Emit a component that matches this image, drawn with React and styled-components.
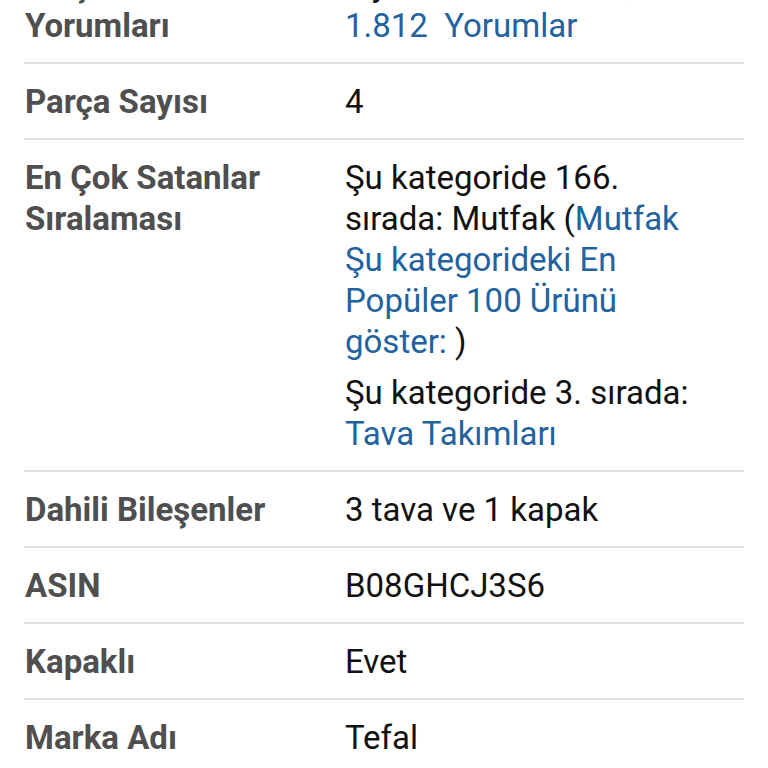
import React from 'react';
import styled, { createGlobalStyle } from 'styled-components';

const GlobalStyle = createGlobalStyle`
  html, body {
    margin: 0;
    padding: 0;
    background: #fff;
    overflow: hidden;
  }
  body {
    font-family: Roboto, "Noto Sans", "Liberation Sans", sans-serif;
    -webkit-font-smoothing: antialiased;
  }
`;

// page is scrolled: first row only partly visible
const Details = styled.div`
  margin-top: -53px;
  padding: 0 24px;
`;

const Row = styled.div`
  display: grid;
  grid-template-columns: 250px 360px;
  column-gap: 70px;
  padding: 17px 0 16px 1px;
  border-bottom: 2px solid #e0e0e0;
  font-size: 33px;
  line-height: 41px;
`;

const Label = styled.div`
  color: #4f4f4f;
  font-weight: 700;
`;

const Value = styled.div`
  color: #111;
  font-weight: 400;
`;

const Para = styled.p`
  margin: 0;
  & + & {
    margin-top: 10px;
  }
`;

const Link = styled.a`
  color: #22629f;
  text-decoration: none;
`;

const rows = [
  { label: 'Dahili Bileşenler', value: '3 tava ve 1 kapak' },
  { label: 'ASIN', value: 'B08GHCJ3S6' },
  { label: 'Kapaklı', value: 'Evet' },
  { label: 'Marka Adı', value: 'Tefal' },
];

export default function App() {
  return (
    <>
      <GlobalStyle />
      <Details>
        <Row>
          <Label>Müşteri Yorumları</Label>
          <Value>
            5 yıldız üzerinden 4,7
            <br />
            <Link href="#">1.812&nbsp; Yorumlar</Link>
          </Value>
        </Row>
        <Row>
          <Label>Parça Sayısı</Label>
          <Value>4</Value>
        </Row>
        <Row>
          <Label>En Çok Satanlar Sıralaması</Label>
          <Value>
            <Para>
              Şu kategoride 166. sırada: Mutfak (<Link href="#">Mutfak Şu kategorideki En Popüler 100 Ürünü göster:</Link> )
            </Para>
            <Para>
              Şu kategoride 3. sırada: <Link href="#">Tava Takımları</Link>
            </Para>
          </Value>
        </Row>
        {rows.map((r) => (
          <Row key={r.label}>
            <Label>{r.label}</Label>
            <Value>{r.value}</Value>
          </Row>
        ))}
      </Details>
    </>
  );
}
